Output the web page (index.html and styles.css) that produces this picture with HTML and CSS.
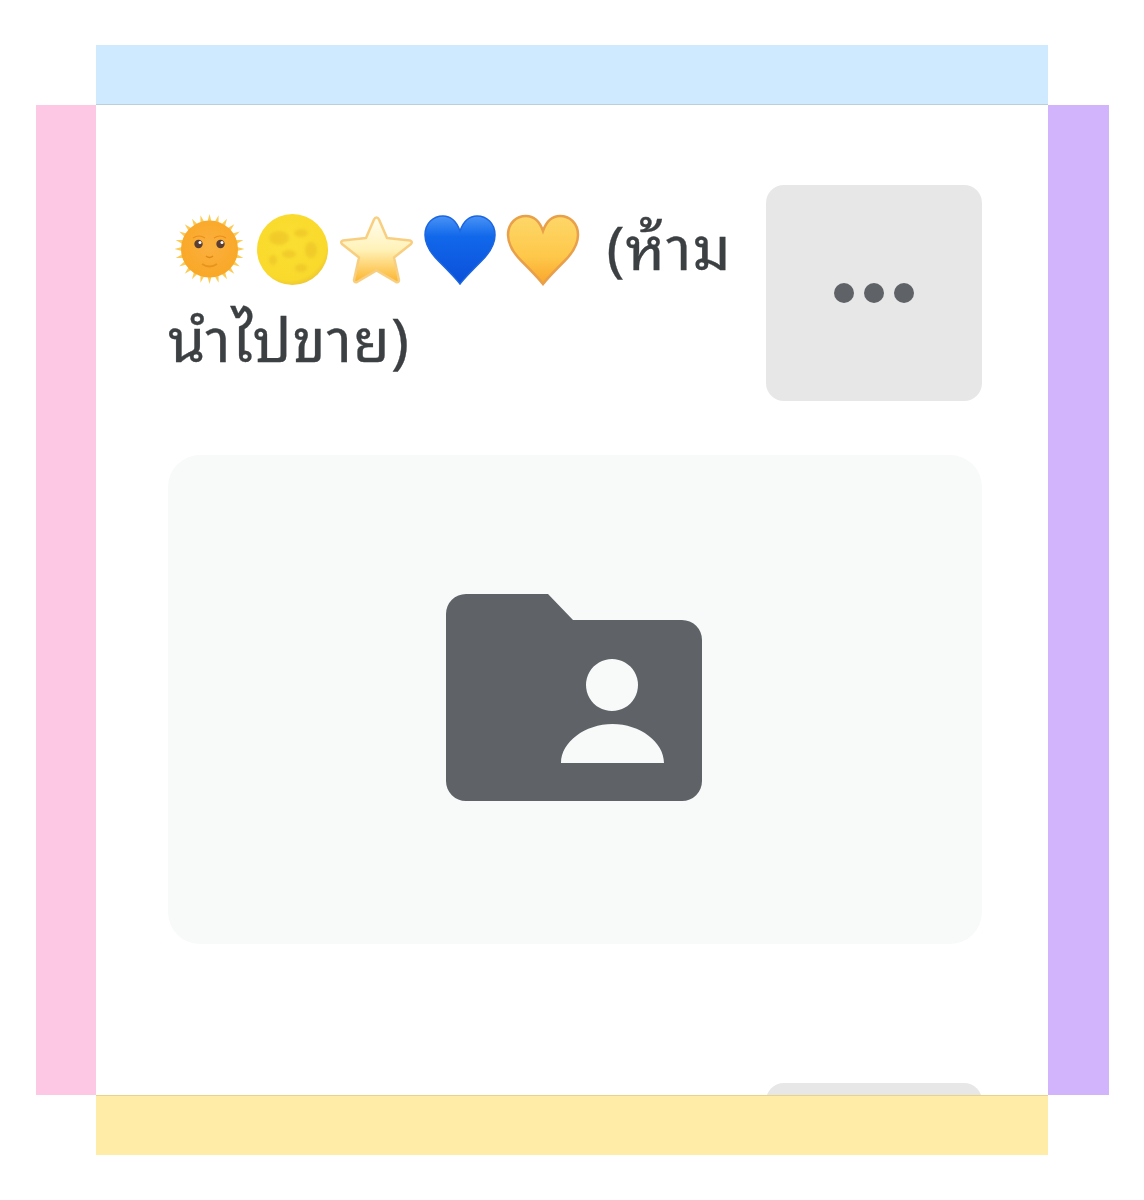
FILE: index.html
```html
<!DOCTYPE html>
<html lang="th">
<head>
<meta charset="utf-8">
<title>โฟลเดอร์ที่แชร์</title>
<link rel="stylesheet" href="styles.css">
</head>
<body>
<svg class="defs" width="0" height="0" aria-hidden="true">
  <defs>
    <radialGradient id="gFace" cx="0.5" cy="0.45" r="0.55"><stop offset="0" stop-color="#fbb040"/><stop offset="1" stop-color="#f9a826"/></radialGradient>
    <radialGradient id="gMoon" cx="0.45" cy="0.4" r="0.65"><stop offset="0" stop-color="#fadf32"/><stop offset="0.82" stop-color="#f9d92c"/><stop offset="1" stop-color="#e8bf34"/></radialGradient>
    <linearGradient id="gStar" x1="0" y1="0" x2="0" y2="1"><stop offset="0" stop-color="#fffdf0"/><stop offset="0.5" stop-color="#fff2b8"/><stop offset="1" stop-color="#fcb42c"/></linearGradient>
    <linearGradient id="gBlue" x1="0" y1="0" x2="0" y2="1"><stop offset="0" stop-color="#4a93f6"/><stop offset="0.3" stop-color="#1168ea"/><stop offset="1" stop-color="#0b4fd8"/></linearGradient>
    <linearGradient id="gGold" x1="0" y1="0" x2="0" y2="1"><stop offset="0" stop-color="#fdd768"/><stop offset="0.6" stop-color="#fec84a"/><stop offset="1" stop-color="#f9a62c"/></linearGradient>
    <filter id="soft" x="-20%" y="-20%" width="140%" height="140%"><feGaussianBlur stdDeviation="1.6"/></filter>
    <polygon id="ray" points="38.800,10 44.200,10 41.500,0"/>
    <g id="rays3">
      <use href="#ray"/>
      <use href="#ray" transform="rotate(15 41.5 35)"/>
      <use href="#ray" transform="rotate(30 41.5 35)"/>
    </g>
    <path id="heart" d="M43 70 C38.500 64 30.500 56 21.500 47 C13.500 39 8 31 8 21 C8 9 16.500 2 26 2 C33.500 2 39.500 7 43 17 C46.500 7 52.500 2 60 2 C69.500 2 78 9 78 21 C78 31 72.500 39 64.500 47 C55.500 56 47.500 64 43 70 Z"/>
  </defs>
</svg>
<main class="board">
  <div class="strip strip-top"></div>
  <div class="strip strip-left"></div>
  <section class="panel">
    <div class="row">
      <h1 class="title"><svg class="emoji" viewBox="0 0 83 72" role="img" aria-label="🌞"><g fill="#fbcb55"><use href="#rays3"/><use href="#rays3" transform="rotate(45 41.5 35)"/><use href="#rays3" transform="rotate(90 41.5 35)"/><use href="#rays3" transform="rotate(135 41.5 35)"/><use href="#rays3" transform="rotate(180 41.5 35)"/><use href="#rays3" transform="rotate(225 41.5 35)"/><use href="#rays3" transform="rotate(270 41.5 35)"/><use href="#rays3" transform="rotate(315 41.5 35)"/></g><circle cx="41.5" cy="35" r="28.500" fill="url(#gFace)"/><circle cx="30.500" cy="30" r="4.200" fill="#5a3d33"/><circle cx="52.500" cy="30" r="4.200" fill="#5a3d33"/><circle cx="32" cy="28.500" r="1.500" fill="#fff"/><circle cx="54" cy="28.500" r="1.500" fill="#fff"/><path d="M25 24 Q31 20 37 24 M46 24 Q52 20 58 24" fill="none" stroke="#ea8f1c" stroke-width="1.200"/><path d="M38 42 Q41.500 45 45 42" fill="none" stroke="#df8a18" stroke-width="1.500"/><path d="M34 50 Q41.500 55 49 50" fill="none" stroke="#e8951f" stroke-width="2"/></svg><svg class="emoji" viewBox="0 0 83 72" role="img" aria-label="🌕"><circle cx="41.500" cy="35.500" r="35.500" fill="url(#gMoon)"/><g fill="#ecc126" opacity="0.6" filter="url(#soft)"><ellipse cx="28" cy="24" rx="10" ry="7"/><ellipse cx="50" cy="19" rx="7" ry="4"/><ellipse cx="60" cy="36" rx="6" ry="8"/><ellipse cx="38" cy="40" rx="7" ry="4"/><ellipse cx="50" cy="54" rx="6" ry="4"/><ellipse cx="22" cy="46" rx="4" ry="5"/></g></svg><svg class="emoji" viewBox="0 0 83 72" role="img" aria-label="⭐"><path d="M42.500 3.500 Q44 3.500 45 5.500 L53 24 L76 26.500 Q79 27.500 77 30 L60 43.500 L65 66 Q65 69 62 68 L42.500 56.500 L23 68 Q20 69 20 66 L25 43.500 L8 30 Q6 27.500 9 26.500 L32 24 L40 5.500 Q41 3.500 42.500 3.500 Z" fill="url(#gStar)" stroke="#f8cf80" stroke-width="2.500" stroke-linejoin="round"/></svg><svg class="emoji" viewBox="0 0 83 72" role="img" aria-label="💙"><use href="#heart" fill="url(#gBlue)" stroke="#1c66e0" stroke-width="1.500"/></svg><svg class="emoji" viewBox="0 0 83 72" role="img" aria-label="💛"><use href="#heart" fill="url(#gGold)" stroke="#e9a04a" stroke-width="2.500"/></svg> <span class="thai">(ห้าม นำไปขาย)</span></h1>
      <button class="more" type="button" aria-label="เพิ่มเติม"><span class="dot"></span><span class="dot"></span><span class="dot"></span></button>
    </div>
    <div class="folder-card">
      <svg class="folder" viewBox="0 0 256 207" aria-hidden="true"><path fill-rule="evenodd" d="M20 0 H102 L127 26 H236 a20 20 0 0 1 20 20 V187 a20 20 0 0 1 -20 20 H20 a20 20 0 0 1 -20 -20 V20 a20 20 0 0 1 20 -20 Z M166 65 a26 26 0 1 0 0.01 0 Z M115 169 H218 C218 148 194 130 166.500 130 C139 130 115 148 115 169 Z"/></svg>
    </div>
    <div class="row row-next">
      <div class="title-space"></div>
      <button class="more" type="button" aria-label="เพิ่มเติม"></button>
    </div>
  </section>
  <div class="strip strip-right"></div>
  <div class="strip strip-bottom"></div>
</main>
</body>
</html>
```
FILE: styles.css
```css
* { box-sizing: border-box; }
html, body { margin: 0; background: #fff; }
.defs { position: absolute; }
.board {
  display: grid;
  grid-template-columns: 60px 952px 61px;
  grid-template-rows: 60px 990px 60px;
  padding: 45px 0 0 36px;
  width: 1144px;
  height: 1200px;
}
.strip-top { grid-column: 2; grid-row: 1; background: #cfeafe; border-bottom: 1px solid #b9cfdd; }
.strip-left { grid-column: 1; grid-row: 2; background: #fdc8e3; }
.strip-right { grid-column: 3; grid-row: 2; background: #d1b4fc; }
.strip-bottom { grid-column: 2; grid-row: 3; background: #ffeca6; border-top: 1px solid #e8d28c; }
.panel {
  grid-column: 2; grid-row: 2;
  background: #fff;
  padding: 80px 66px 0 72px;
  overflow: hidden;
}
.row { display: flex; justify-content: space-between; align-items: flex-start; }
.title {
  margin: 12px 0 0;
  width: 570px;
  font: 400 60px/92px "Noto Sans Thai Looped", "Noto Sans Thai", "Noto Sans", "Liberation Sans", sans-serif;
  color: #3c4043;
}
.thai { letter-spacing: 1px; margin-left: 8px; -webkit-text-stroke: 0.3px #3c4043; }
.emoji { width: 83px; height: 72px; vertical-align: -16px; }
.more {
  display: flex;
  flex: none;
  align-items: center;
  justify-content: center;
  gap: 10px;
  width: 216px;
  height: 216px;
  padding: 0;
  border: 0;
  border-radius: 18px;
  background: #e7e7e7;
}
.dot { width: 20px; height: 20px; border-radius: 50%; background: #5f6368; }
.folder-card {
  display: flex;
  align-items: center;
  justify-content: center;
  height: 489px;
  margin-top: 54px;
  padding: 0 2px 4px 0;
  border-radius: 32px;
  background: #f8f9f9;
}
.folder { width: 256px; height: 207px; fill: #5f6368; }
.row-next { margin-top: 139px; }
```
